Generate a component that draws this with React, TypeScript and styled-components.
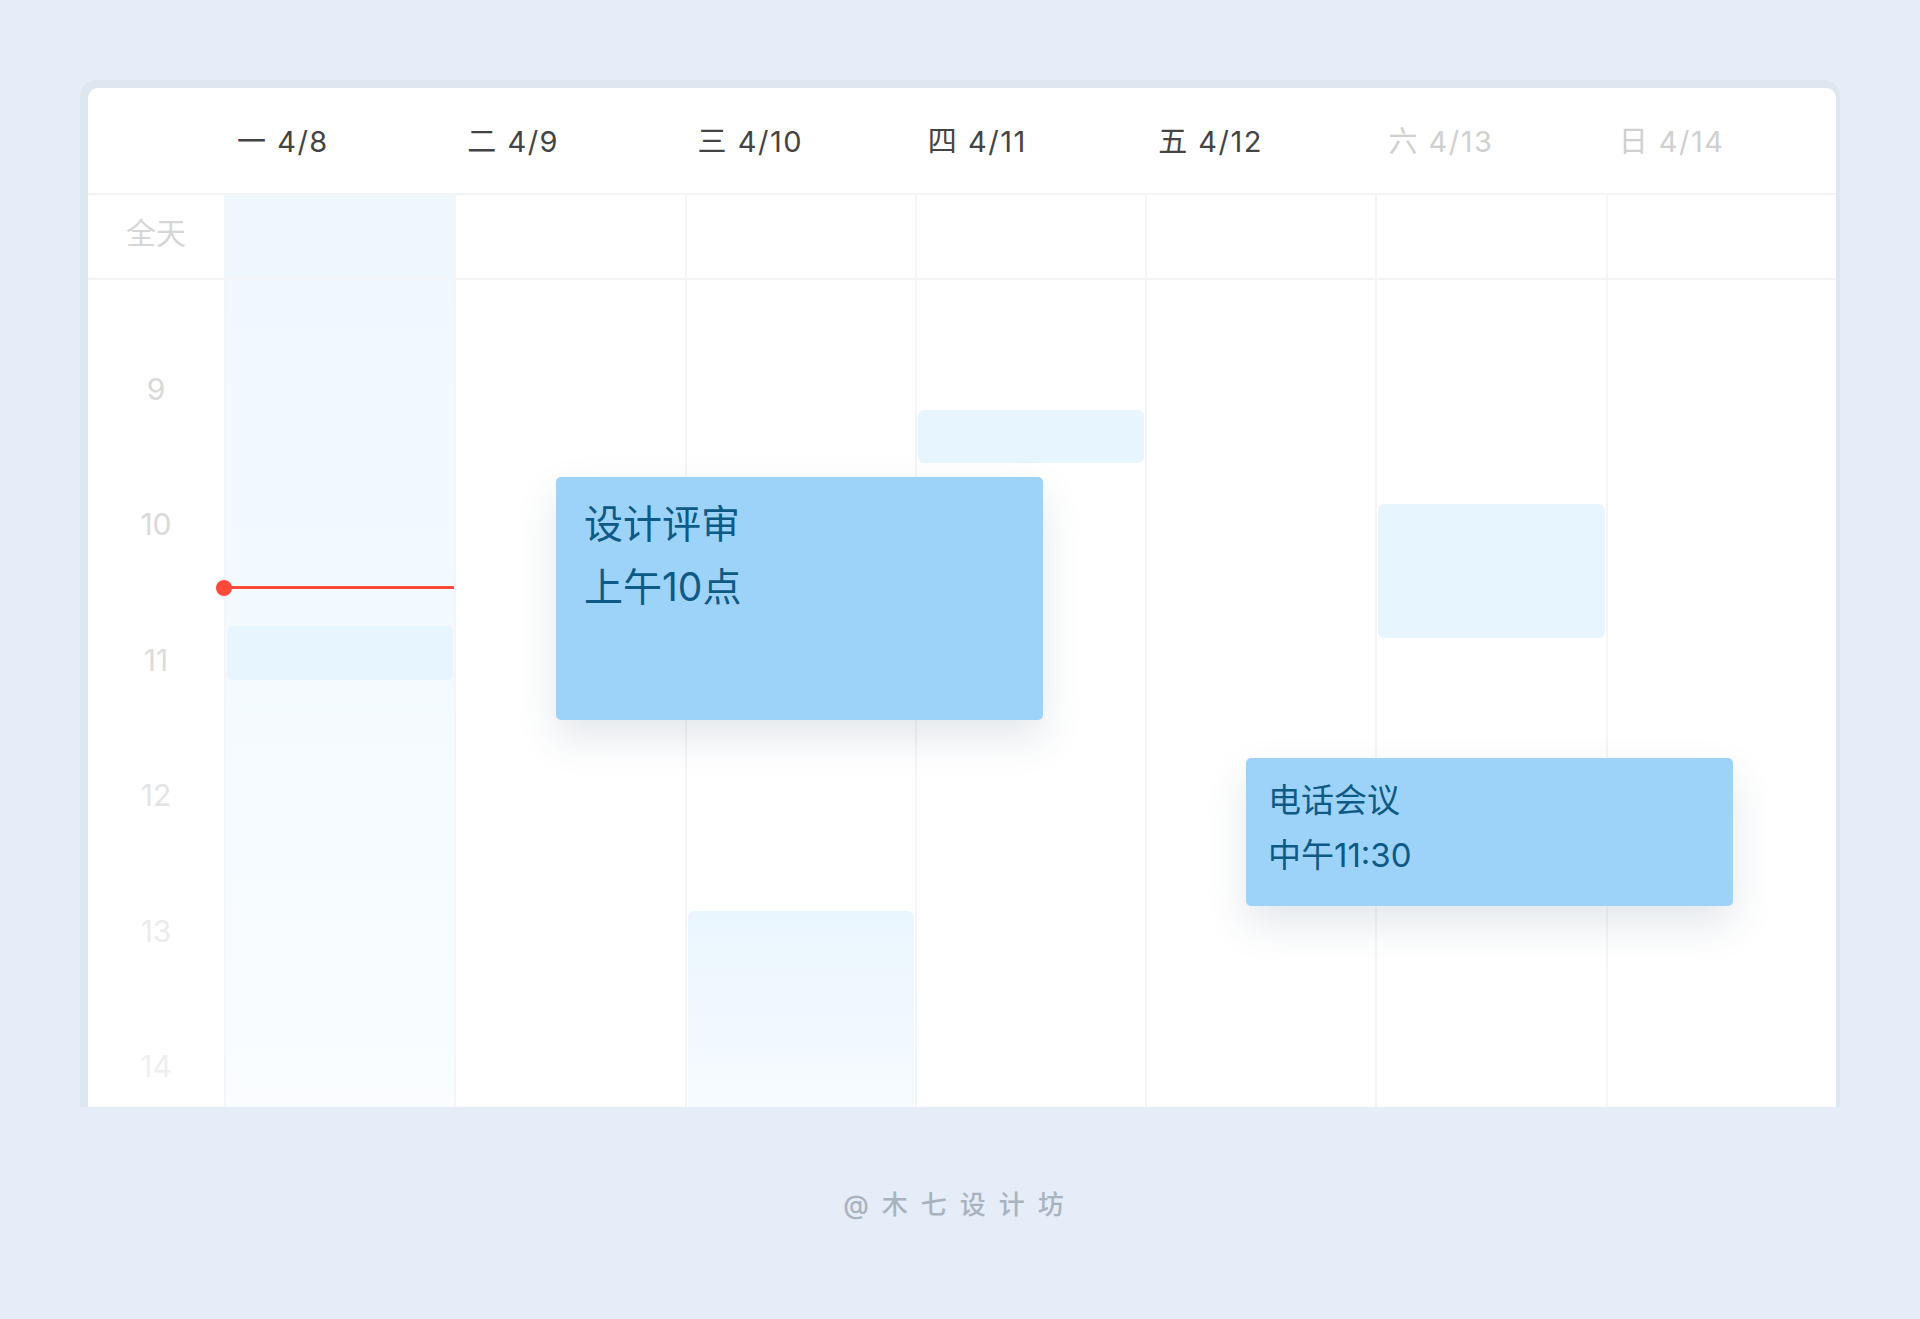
import React from "react";
import styled, { createGlobalStyle } from "styled-components";

const GlobalStyle = createGlobalStyle`
  html, body { margin: 0; padding: 0; background: #e5edf8; }
  body { font-family: Inter, "Noto Sans CJK SC", sans-serif; }
  * { box-sizing: border-box; }
`;

const HOUR = 135.4;
const FIRST_HOUR_CENTER = 109;

const Page = styled.div`
  width: 1920px;
  height: 1319px;
  display: flex;
  flex-direction: column;
  align-items: center;
  padding-top: 80px;
  background: #e5edf8;
  overflow: hidden;
`;

const Frame = styled.div`
  width: 1760px;
  padding: 8px 4px 0 8px;
  background: #dee6ef;
  border-radius: 16px 16px 0 0;
`;

const Card = styled.div`
  width: 1748px;
  height: 1019px;
  background: #ffffff;
  border-radius: 10px 10px 0 0;
  display: flex;
  flex-direction: column;
  overflow: hidden;
`;

const columns = `136px repeat(7, 1fr)`;

const HeaderRow = styled.div`
  display: grid;
  grid-template-columns: ${columns};
  height: 107px;
  border-bottom: 2px solid #f3f4f5;
`;

const HeaderCell = styled.div<{ $weekend?: boolean }>`
  display: flex;
  align-items: center;
  padding-left: 13px;
  padding-bottom: 4px;
  font-size: 29px;
  letter-spacing: 1.5px;
  color: ${(p) => (p.$weekend ? "#d0d0d0" : "#444444")};
  white-space: nowrap;
`;

const AllDayRow = styled.div`
  display: grid;
  grid-template-columns: ${columns};
  height: 85px;
  border-bottom: 2px solid #f3f4f5;
`;

const AllDayLabel = styled.div`
  display: flex;
  align-items: center;
  justify-content: center;
  padding-bottom: 12px;
  font-size: 30px;
  color: #d6d6d6;
`;

const AllDayCell = styled.div<{ $today?: boolean }>`
  border-left: 2px solid #f4f5f6;
  background: ${(p) => (p.$today ? "#eff7fd" : "transparent")};
`;

const TimeGrid = styled.div`
  flex: 1;
  display: grid;
  grid-template-columns: ${columns};
  position: relative;
  overflow: hidden;
`;

const Gutter = styled.div`
  display: flex;
  flex-direction: column;
  padding-top: ${FIRST_HOUR_CENTER - HOUR / 2}px;
`;

const HourLabel = styled.div<{ $shade: string }>`
  height: ${HOUR}px;
  flex-shrink: 0;
  display: flex;
  align-items: center;
  justify-content: center;
  font-size: 30px;
  color: ${(p) => p.$shade};
`;

const DayColumn = styled.div<{ $today?: boolean }>`
  position: relative;
  border-left: 2px solid #f4f5f6;
  background: ${(p) =>
    p.$today ? "linear-gradient(180deg, #f0f8fe 0%, #f5fbff 60%, #fbfdff 100%)" : "transparent"};
`;

const GhostBlock = styled.div<{ $top: number; $height: number; $fade?: boolean }>`
  position: absolute;
  left: 1px;
  right: 1px;
  top: ${(p) => p.$top}px;
  height: ${(p) => p.$height}px;
  border-radius: 6px;
  background: ${(p) =>
    p.$fade ? "linear-gradient(180deg, #eaf6fe 0%, #f2f9fe 55%, #fafdff 100%)" : "#e6f5fe"};
`;

const NowLine = styled.div<{ $top: number }>`
  position: absolute;
  left: -2px;
  right: 0;
  top: ${(p) => p.$top}px;
  height: 3px;
  background: #fd4a3b;
  z-index: 2;

  &::before {
    content: "";
    position: absolute;
    left: -8px;
    top: -6.5px;
    width: 16px;
    height: 16px;
    border-radius: 50%;
    background: #fd4a3b;
  }
`;

const EventCard = styled.div<{
  $left: number;
  $top: number;
  $width: number;
  $height: number;
  $size: number;
  $lh: number;
  $padX: number;
}>`
  position: absolute;
  z-index: 3;
  left: ${(p) => p.$left}px;
  top: ${(p) => p.$top}px;
  width: ${(p) => p.$width}px;
  height: ${(p) => p.$height}px;
  padding: 15px ${(p) => p.$padX}px;
  background: #9ed3f9;
  border-radius: 5px;
  box-shadow: 0 18px 40px rgba(40, 70, 100, 0.13);
  color: #0e5a86;
  font-size: ${(p) => p.$size}px;
  line-height: ${(p) => p.$lh}px;
`;

const EventLine = styled.div`
  white-space: nowrap;
`;

const Footer = styled.div`
  margin-top: 85px;
  font-size: 26px;
  line-height: 26px;
  letter-spacing: 13px;
  font-weight: 500;
  color: #a8b3bf;
`;

const days = [
  { label: "一 4/8" },
  { label: "二 4/9" },
  { label: "三 4/10" },
  { label: "四 4/11" },
  { label: "五 4/12" },
  { label: "六 4/13", weekend: true },
  { label: "日 4/14", weekend: true },
];

const hours = [
  { h: "9", c: "#d9d9d9" },
  { h: "10", c: "#dadada" },
  { h: "11", c: "#dcdcdc" },
  { h: "12", c: "#e4e4e4" },
  { h: "13", c: "#ebebeb" },
  { h: "14", c: "#efefef" },
];

const ghosts: Record<number, { top: number; height: number; fade?: boolean }[]> = {
  0: [{ top: 346, height: 54 }],
  2: [{ top: 631, height: 240, fade: true }],
  3: [{ top: 130, height: 53 }],
  5: [{ top: 224, height: 134 }],
};

const events = [
  { left: 468, top: 197, width: 487, height: 243, size: 39, lh: 63, padX: 28, lines: ["设计评审", "上午10点"] },
  { left: 1158, top: 478, width: 487, height: 148, size: 33, lh: 55, padX: 22, lines: ["电话会议", "中午11:30"] },
];

export default function App() {
  return (
    <>
      <GlobalStyle />
      <Page>
        <Frame>
          <Card>
            <HeaderRow>
              <div />
              {days.map((d) => (
                <HeaderCell key={d.label} $weekend={d.weekend}>
                  {d.label}
                </HeaderCell>
              ))}
            </HeaderRow>
            <AllDayRow>
              <AllDayLabel>全天</AllDayLabel>
              {days.map((d, i) => (
                <AllDayCell key={d.label} $today={i === 0} />
              ))}
            </AllDayRow>
            <TimeGrid>
              <Gutter>
                {hours.map((h) => (
                  <HourLabel key={h.h} $shade={h.c}>
                    {h.h}
                  </HourLabel>
                ))}
              </Gutter>
              {days.map((d, i) => (
                <DayColumn key={d.label} $today={i === 0}>
                  {(ghosts[i] || []).map((g, k) => (
                    <GhostBlock key={k} $top={g.top} $height={g.height} $fade={g.fade} />
                  ))}
                  {i === 0 && <NowLine $top={306} />}
                </DayColumn>
              ))}
              {events.map((e) => (
                <EventCard
                  key={e.lines[0]}
                  $left={e.left}
                  $top={e.top}
                  $width={e.width}
                  $height={e.height}
                  $size={e.size}
                  $lh={e.lh}
                  $padX={e.padX}
                >
                  {e.lines.map((l) => (
                    <EventLine key={l}>{l}</EventLine>
                  ))}
                </EventCard>
              ))}
            </TimeGrid>
          </Card>
        </Frame>
        <Footer>@木七设计坊</Footer>
      </Page>
    </>
  );
}
